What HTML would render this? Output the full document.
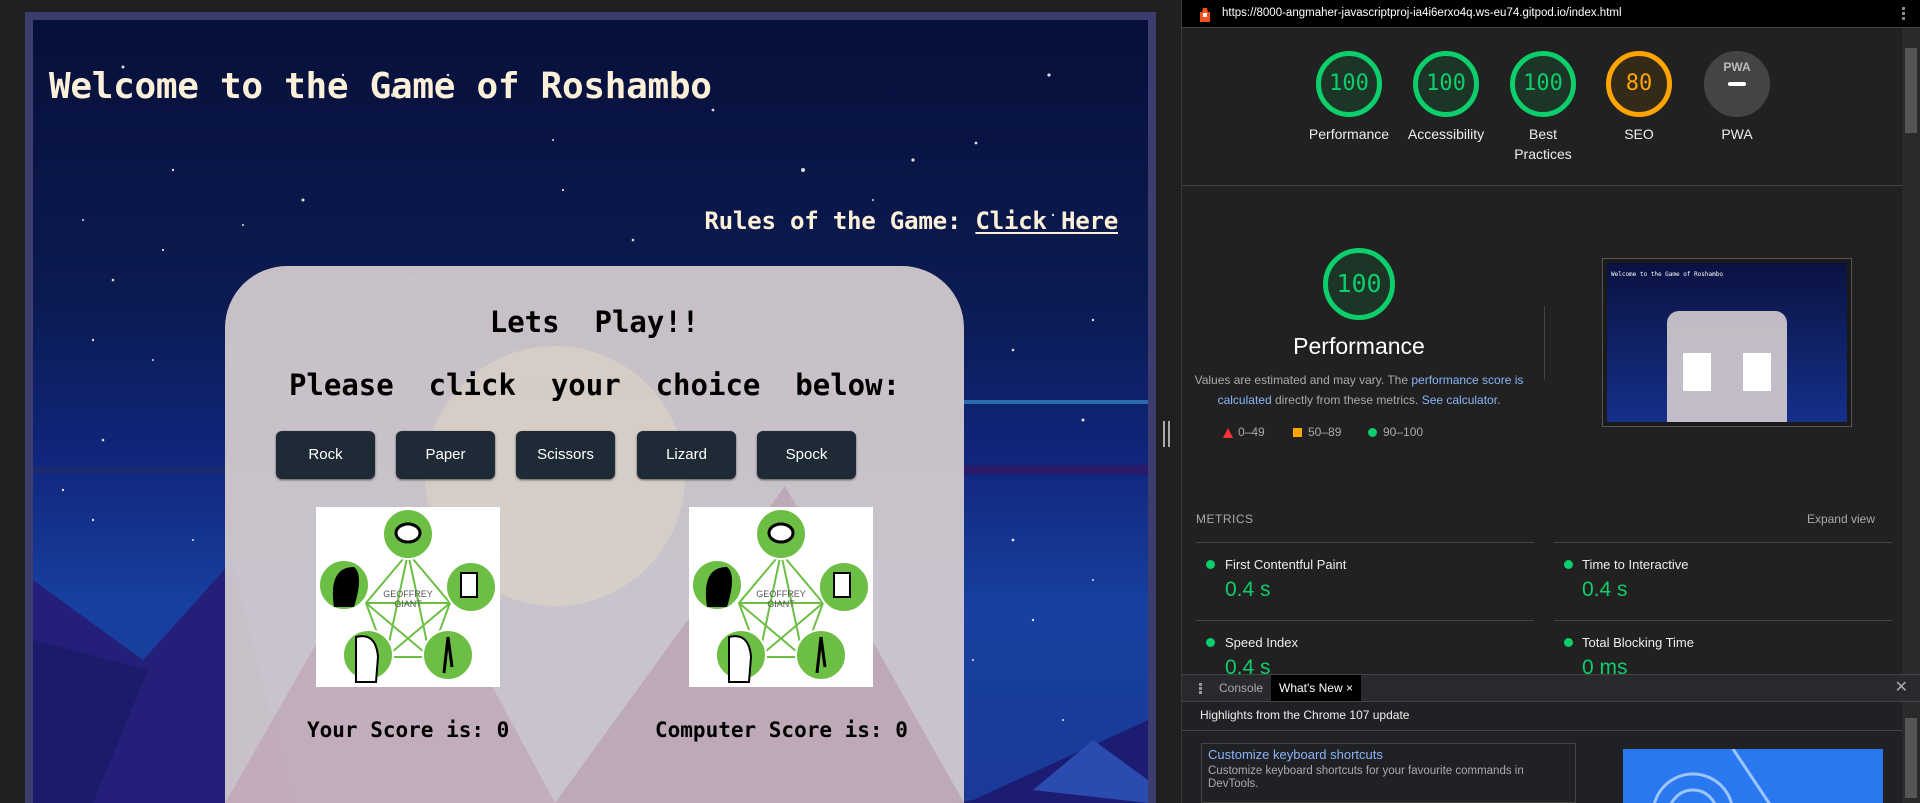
<!DOCTYPE html>
<html><head><meta charset="utf-8">
<style>
*{margin:0;padding:0;box-sizing:border-box}
html,body{overflow:hidden}
body{width:1920px;height:803px;background:#202020;position:relative;font-family:"Liberation Sans",sans-serif}
.frame{position:absolute;left:25px;top:12px;width:1131px;height:791px;background:#3c3c6e}
.page{position:absolute;left:33px;top:20px;width:1115px;height:783px;overflow:hidden;
background:linear-gradient(180deg,#07103a 0%,#0b1a50 35%,#10257a 55%,#1740a0 75%,#1a3a98 100%)}
.mono{font-family:"DejaVu Sans Mono","Liberation Mono",monospace;font-weight:bold}
.title{position:absolute;left:16px;top:46px;font-size:36px;color:#fdf0d8;white-space:nowrap;letter-spacing:-0.3px}
.rules{position:absolute;right:30px;top:187px;font-size:24.2px;color:#fdf0d8;white-space:nowrap;letter-spacing:-0.3px}
.rules u{text-decoration:underline;text-underline-offset:3px}
.card{position:absolute;left:192px;top:246px;width:739px;height:537px;border-radius:62px 62px 0 0;background:rgba(214,205,208,.93);overflow:hidden}
.c{position:absolute;left:0;width:739px;text-align:center;color:#000;white-space:pre}
.btn{position:absolute;top:165px;width:99px;height:48px;background:#1e2a35;border-radius:6px;color:#fff;font-size:15px;text-align:center;line-height:48px;box-shadow:0 1px 2px #555}
.img{position:absolute;top:241px;width:184px;height:180px;background:#fff}
.score{position:absolute;top:452px;font-size:21px;color:#000;white-space:pre}
.rp{position:absolute;left:1181px;top:0;width:739px;height:803px;background:#212121;border-left:1px solid #3a3a3a;color:#e8e8e8;overflow:hidden}
.addr{position:absolute;left:0;top:0;width:739px;height:28px;background:#000;border-bottom:1px solid #444}
.g{position:absolute;width:66px;height:66px;border-radius:50%;border:5px solid #0cce6b;background:#1d3527;color:#0cce6b;font-family:"DejaVu Sans Mono",monospace;font-size:22px;text-align:center;line-height:56px}
.gl{position:absolute;width:110px;text-align:center;font-size:14px;color:#eee;line-height:20px}
.hr{position:absolute;height:1px;background:#444}
.dot{position:absolute;width:9px;height:9px;border-radius:50%;background:#0cce6b}
.ml{position:absolute;font-size:13px;color:#eee}
.mv{position:absolute;font-size:21px;color:#0cce6b}
a{color:#8ab4f8}
</style></head><body>
<div class="frame"></div>
<div class="page">
<svg width="1115" height="783" style="position:absolute;left:0;top:0">
<polygon points="0,560 110,640 200,540 260,783 0,783" fill="#24207a"/>
<polygon points="0,620 115,650 60,783 0,783" fill="#1c1a6a"/>
<polygon points="940,780 1115,700 1115,783 920,783" fill="#1c1d72"/>
<polygon points="1000,770 1060,720 1115,760 1115,783" fill="#2a4cb0"/>
<rect x="0" y="447" width="1115" height="6" fill="#1e2a70"/>
<rect x="930" y="380" width="185" height="4" fill="#2a6ab0"/>
<rect x="930" y="445" width="185" height="10" fill="#2a1a6a"/>
<g fill="#fff" opacity=".85">
<circle cx="90" cy="47" r="1.5"/><circle cx="310" cy="55" r="1.2"/><circle cx="360" cy="75" r="2"/><circle cx="415" cy="55" r="1.3"/><circle cx="520" cy="120" r="1"/><circle cx="680" cy="90" r="1.4"/><circle cx="1016" cy="55" r="1.6"/><circle cx="943" cy="123" r="1.4"/><circle cx="270" cy="180" r="1.5"/><circle cx="210" cy="205" r="1"/><circle cx="140" cy="150" r="1.2"/><circle cx="80" cy="260" r="1.3"/><circle cx="50" cy="200" r="1"/><circle cx="380" cy="260" r="1.2"/><circle cx="530" cy="170" r="1.1"/><circle cx="600" cy="220" r="1.3"/><circle cx="770" cy="150" r="2"/><circle cx="880" cy="140" r="1.6"/><circle cx="840" cy="180" r="1"/><circle cx="1020" cy="195" r="1.2"/><circle cx="130" cy="230" r="1.1"/><circle cx="60" cy="320" r="1.2"/><circle cx="120" cy="340" r="1"/><circle cx="980" cy="330" r="1.3"/><circle cx="1060" cy="300" r="1.2"/><circle cx="1050" cy="400" r="1.5"/><circle cx="980" cy="520" r="1.4"/><circle cx="1000" cy="600" r="1.2"/><circle cx="1060" cy="560" r="1"/><circle cx="70" cy="420" r="1.3"/><circle cx="30" cy="470" r="1.2"/><circle cx="160" cy="520" r="1"/><circle cx="60" cy="500" r="1.2"/><circle cx="940" cy="640" r="1"/><circle cx="1030" cy="700" r="1"/></g>
</svg>
<div class="title mono">Welcome to the Game of Roshambo</div>
<div class="rules mono">Rules of the Game: <u>Click Here</u></div>
<div class="card">
<svg width="739" height="537" style="position:absolute;left:0;top:0;opacity:.25">
<circle cx="330" cy="210" r="130" fill="#fff3c0"/>
<polygon points="0,537 170,240 330,537" fill="#b07090"/>
<polygon points="330,537 560,220 739,537" fill="#a06080"/>
</svg>
<div class="c mono" style="top:39px;font-size:29px">Lets  Play!!</div>
<div class="c mono" style="top:102px;font-size:29px">Please  click  your  choice  below:</div>
<div class="btn" style="left:51px">Rock</div>
<div class="btn" style="left:171px">Paper</div>
<div class="btn" style="left:291px">Scissors</div>
<div class="btn" style="left:412px">Lizard</div>
<div class="btn" style="left:532px">Spock</div>
<div class="img" style="left:91px"><svg width="184" height="180" viewBox="0 0 184 180">
<g fill="none" stroke="#6cbf44" stroke-width="2"><path d="M92 46 L134 96 L114 150 L70 150 L50 96 Z"/><path d="M92 46 L114 150 M134 96 L50 96 M70 150 L92 46 M50 96 L114 150 M134 96 L70 150"/></g>
<g fill="#6cbf44" stroke="#fff" stroke-width="2"><circle cx="92" cy="27" r="25"/><circle cx="155" cy="80" r="25"/><circle cx="132" cy="148" r="25"/><circle cx="52" cy="148" r="25"/><circle cx="28" cy="78" r="25"/></g>
<ellipse cx="92" cy="26" rx="12" ry="9" fill="#fff" stroke="#000" stroke-width="3"/><rect x="145" y="66" width="16" height="24" fill="#fff" stroke="#000" stroke-width="2"/><path d="M132 130 L128 166 M132 130 L136 160" stroke="#000" stroke-width="3"/><path d="M40 130 q20 -5 22 20 l-2 25 h-20z" fill="#fff" stroke="#000" stroke-width="2"/><path d="M18 100 q-6 -40 20 -40 q10 8 0 40z" fill="#000"/><text x="92" y="90" font-size="9" text-anchor="middle" fill="#555" font-family="Liberation Sans">GEOFFREY</text><text x="92" y="100" font-size="9" text-anchor="middle" fill="#555" font-family="Liberation Sans">GIANT</text></svg></div>
<div class="img" style="left:464px"><svg width="184" height="180" viewBox="0 0 184 180">
<g fill="none" stroke="#6cbf44" stroke-width="2"><path d="M92 46 L134 96 L114 150 L70 150 L50 96 Z"/><path d="M92 46 L114 150 M134 96 L50 96 M70 150 L92 46 M50 96 L114 150 M134 96 L70 150"/></g>
<g fill="#6cbf44" stroke="#fff" stroke-width="2"><circle cx="92" cy="27" r="25"/><circle cx="155" cy="80" r="25"/><circle cx="132" cy="148" r="25"/><circle cx="52" cy="148" r="25"/><circle cx="28" cy="78" r="25"/></g>
<ellipse cx="92" cy="26" rx="12" ry="9" fill="#fff" stroke="#000" stroke-width="3"/><rect x="145" y="66" width="16" height="24" fill="#fff" stroke="#000" stroke-width="2"/><path d="M132 130 L128 166 M132 130 L136 160" stroke="#000" stroke-width="3"/><path d="M40 130 q20 -5 22 20 l-2 25 h-20z" fill="#fff" stroke="#000" stroke-width="2"/><path d="M18 100 q-6 -40 20 -40 q10 8 0 40z" fill="#000"/><text x="92" y="90" font-size="9" text-anchor="middle" fill="#555" font-family="Liberation Sans">GEOFFREY</text><text x="92" y="100" font-size="9" text-anchor="middle" fill="#555" font-family="Liberation Sans">GIANT</text></svg></div>
<div class="score mono" style="left:82px">Your Score is: 0</div>
<div class="score mono" style="left:430px">Computer Score is: 0</div>
</div>
</div>
<div style="position:absolute;left:1163px;top:421px;width:2px;height:26px;background:#aaa"></div>
<div style="position:absolute;left:1168px;top:421px;width:2px;height:26px;background:#aaa"></div>

<div class="rp">
<div class="addr">
<svg style="position:absolute;left:17px;top:6px" width="12" height="17"><path d="M4 2h4l1 4h2v10H1V6h2z" fill="#f4511e"/><rect x="4" y="7" width="4" height="4" fill="#fff"/></svg>
<div style="position:absolute;left:40px;top:7px;font-size:11.5px;color:#fff">https://8000-angmaher-javascriptproj-ia4i6erxo4q.ws-eu74.gitpod.io/index.html</div>
<div style="position:absolute;left:720px;top:7px;width:3px;height:3px;background:#888;box-shadow:0 5px #888,0 10px #888"></div>
</div>
<div class="g" style="left:134px;top:51px">100</div>
<div class="g" style="left:231px;top:51px">100</div>
<div class="g" style="left:328px;top:51px">100</div>
<div class="g" style="left:424px;top:51px;border-color:#ffa400;background:#332a1a;color:#ffa400">80</div>
<div class="g" style="left:522px;top:51px;border-color:#444;background:#444;color:#bbb;font-size:12px;line-height:22px;font-family:Liberation Sans;font-weight:bold">PWA<div style="width:18px;height:4px;background:#fff;border-radius:2px;margin:4px auto 0"></div></div>
<div class="gl" style="left:112px;top:124px">Performance</div>
<div class="gl" style="left:209px;top:124px">Accessibility</div>
<div class="gl" style="left:306px;top:124px">Best<br>Practices</div>
<div class="gl" style="left:402px;top:124px">SEO</div>
<div class="gl" style="left:500px;top:124px">PWA</div>
<div class="hr" style="left:0;top:185px;width:730px"></div>
<div class="g" style="left:141px;top:248px;width:72px;height:72px;line-height:62px;font-size:25px">100</div>
<div style="position:absolute;left:60px;top:333px;width:234px;text-align:center;font-size:23px;color:#fff">Performance</div>
<div style="position:absolute;left:10px;top:370px;width:334px;text-align:center;font-size:12px;color:#aaa;line-height:20px">Values are estimated and may vary. The <a>performance score is calculated</a> directly from these metrics. <a>See calculator.</a></div>
<div style="position:absolute;left:41px;top:428px;width:0;height:0;border-left:5px solid transparent;border-right:5px solid transparent;border-bottom:10px solid #f33"></div>
<div style="position:absolute;left:56px;top:425px;font-size:12px;color:#aaa">0–49</div>
<div style="position:absolute;left:111px;top:428px;width:9px;height:9px;background:#ffa400"></div>
<div style="position:absolute;left:126px;top:425px;font-size:12px;color:#aaa">50–89</div>
<div style="position:absolute;left:186px;top:428px;width:9px;height:9px;border-radius:50%;background:#0cce6b"></div>
<div style="position:absolute;left:201px;top:425px;font-size:12px;color:#aaa">90–100</div>
<div style="position:absolute;left:362px;top:306px;width:1px;height:74px;background:#444"></div>
<div style="position:absolute;left:420px;top:258px;width:250px;height:169px;border:1px solid #555;background:#1a1a1a">
<div style="position:absolute;left:4px;top:4px;width:240px;height:159px;background:linear-gradient(#0a1240,#15308a)">
<div style="position:absolute;left:4px;top:8px;font-size:6px;color:#fff;font-family:monospace">Welcome to the Game of Roshambo</div>
<div style="position:absolute;left:60px;top:48px;width:120px;height:111px;border-radius:12px 12px 0 0;background:rgba(214,205,208,.9)"></div>
<div style="position:absolute;left:76px;top:90px;width:28px;height:38px;background:#fff"></div>
<div style="position:absolute;left:136px;top:90px;width:28px;height:38px;background:#fff"></div>
</div></div>
<div style="position:absolute;left:14px;top:512px;font-size:12px;color:#aaa;letter-spacing:.5px">METRICS</div>
<div style="position:absolute;right:45px;top:512px;font-size:12px;color:#aaa">Expand view</div>
<div class="hr" style="left:14px;top:542px;width:338px"></div>
<div class="hr" style="left:372px;top:542px;width:338px"></div>
<div class="dot" style="left:24px;top:560px"></div><div class="ml" style="left:43px;top:557px">First Contentful Paint</div><div class="mv" style="left:43px;top:578px">0.4 s</div>
<div class="dot" style="left:382px;top:560px"></div><div class="ml" style="left:400px;top:557px">Time to Interactive</div><div class="mv" style="left:400px;top:578px">0.4 s</div>
<div class="hr" style="left:14px;top:620px;width:338px"></div>
<div class="hr" style="left:372px;top:620px;width:338px"></div>
<div class="dot" style="left:24px;top:638px"></div><div class="ml" style="left:43px;top:635px">Speed Index</div><div class="mv" style="left:43px;top:656px">0.4 s</div>
<div class="dot" style="left:382px;top:638px"></div><div class="ml" style="left:400px;top:635px">Total Blocking Time</div><div class="mv" style="left:400px;top:656px">0 ms</div>
<div style="position:absolute;left:720px;top:28px;width:18px;height:646px;background:#2a2a2a"><div style="margin:20px 3px;width:12px;height:85px;background:#555"></div></div>
<div style="position:absolute;left:0;top:674px;width:739px;height:129px;background:#202124;overflow:hidden">
<div style="position:absolute;left:0;top:0;width:739px;height:28px;background:#292a2d;border-top:1px solid #444;border-bottom:1px solid #444"></div>
<div style="position:absolute;left:17px;top:9px;width:3px;height:3px;background:#999;box-shadow:0 4px #999,0 8px #999"></div>
<div style="position:absolute;left:37px;top:7px;font-size:12px;color:#aaa">Console</div>
<div style="position:absolute;left:89px;top:1px;width:90px;height:26px;background:#000;color:#fff;font-size:12px;line-height:26px;padding-left:8px;white-space:nowrap">What's New ×</div>
<div style="position:absolute;right:13px;top:3px;font-size:16px;color:#aaa">✕</div>
<div style="position:absolute;left:0;top:28px;width:720px;height:29px;border-bottom:1px solid #444;font-size:12px;color:#eee;padding:6px 0 0 18px">Highlights from the Chrome 107 update</div>
<div style="position:absolute;left:19px;top:69px;width:375px;height:60px;border:1px solid #444;padding:3px 0 0 6px"><div style="font-size:13px;color:#8ab4f8">Customize keyboard shortcuts</div><div style="font-size:11.5px;color:#aaa;line-height:13px;margin-top:3px">Customize keyboard shortcuts for your favourite commands in DevTools.</div></div>
<div style="position:absolute;left:441px;top:75px;width:260px;height:54px;background:#2a78ef;overflow:hidden"><svg width="260" height="54"><g fill="none" stroke="#9cc4ff" stroke-width="3"><circle cx="70" cy="65" r="40"/><circle cx="70" cy="65" r="24"/><path d="M110 0 L150 60"/></g></svg></div>
<div style="position:absolute;left:720px;top:28px;width:18px;height:101px;background:#2a2a2a"><div style="margin:16px 3px;width:12px;height:80px;background:#555"></div></div>
</div>
</div>
</body></html>
